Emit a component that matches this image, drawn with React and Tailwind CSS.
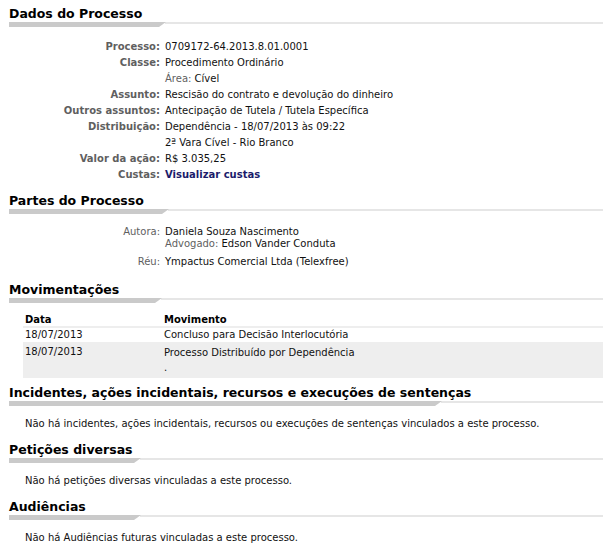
import React from "react";

const Heading = ({ title, barClass }) => (
  <div className="pl-[9px]">
    <h2 className="text-[12.5px] leading-[16px] font-bold text-black">{title}</h2>
    <div className="flex items-start h-[5px]">
      <div className={`h-[5px] bg-[#cacaca] [clip-path:polygon(0_0,100%_0,calc(100%-7px)_100%,0_100%)] ${barClass}`} />
      <div className="flex-1 h-[2px] bg-[#e6e6e6] -ml-[1px]" />
    </div>
  </div>
);

const Row = ({ label, children, plain }) => (
  <div className="grid grid-cols-[160px_1fr] gap-x-[5px] leading-[16px]">
    <div className={`text-right ${plain ? "" : "font-bold"} text-[#5f5f5f]`}>{label}</div>
    <div className="text-[#111]">{children}</div>
  </div>
);

const Empty = ({ children }) => (
  <p className="pl-[25px] mt-[11px] mb-[11px] leading-[14px] text-[#111]">{children}</p>
);

const App = () => {
  return (
    <div className="w-[603px] h-[550px] bg-white overflow-hidden text-[10px] [font-family:'DejaVu_Sans',Verdana,sans-serif] pt-[6px]">
      <Heading title="Dados do Processo" barClass="w-[157px]" />
      <div className="mt-[12px]">
        <Row label="Processo:">0709172-64.2013.8.01.0001</Row>
        <Row label="Classe:">Procedimento Ordinário</Row>
        <Row label="">
          <span className="text-[#5f5f5f]">Área:</span> Cível
        </Row>
        <Row label="Assunto:">Rescisão do contrato e devolução do dinheiro</Row>
        <Row label="Outros assuntos:">Antecipação de Tutela / Tutela Específica</Row>
        <Row label="Distribuição:">Dependência - 18/07/2013 às 09:22</Row>
        <Row label="">2ª Vara Cível - Rio Branco</Row>
        <Row label="Valor da ação:">R$ 3.035,25</Row>
        <Row label="Custas:">
          <a href="#" className="font-bold text-[#1b1b6b]">Visualizar custas</a>
        </Row>
      </div>

      <div className="mt-[10px]">
        <Heading title="Partes do Processo" barClass="w-[160px]" />
      </div>
      <div className="mt-[12px] grid grid-cols-[160px_1fr] gap-x-[5px] gap-y-[6px] leading-[12px]">
        <div className="text-right text-[#5f5f5f]">Autora:</div>
        <div className="text-[#111]">
          <div>Daniela Souza Nascimento</div>
          <div>
            <span className="text-[#5f5f5f]">Advogado:</span> Edson Vander Conduta
          </div>
        </div>
        <div className="text-right text-[#5f5f5f]">Réu:</div>
        <div className="text-[#111]">Ympactus Comercial Ltda (Telexfree)</div>
      </div>

      <div className="mt-[14px]">
        <Heading title="Movimentações" barClass="w-[153px]" />
      </div>
      <table className="ml-[23px] mt-[10px] w-[580px] border-collapse">
        <thead className="leading-[13px]">
          <tr className="border-b-2 border-[#eeeeee]">
            <th className="w-[139px] pl-[2px] text-left font-bold text-black">Data</th>
            <th className="pl-[2px] text-left font-bold text-black">Movimento</th>
          </tr>
        </thead>
        <tbody className="text-[#111] leading-[14px]">
          <tr>
            <td className="pl-[2px] align-top">18/07/2013</td>
            <td className="pl-[2px] align-top">Concluso para Decisão Interlocutória</td>
          </tr>
          <tr className="bg-[#eeeeee]">
            <td className="pl-[2px] pt-[3px] pb-[3px] align-top">18/07/2013</td>
            <td className="pl-[2px] pt-[3px] pb-[3px] align-top leading-[15px]">
              <div>Processo Distribuído por Dependência</div>
              <div>.</div>
            </td>
          </tr>
        </tbody>
      </table>

      <div className="mt-[7px]">
        <Heading title="Incidentes, ações incidentais, recursos e execuções de sentenças" barClass="w-[433px]" />
      </div>
      <Empty>Não há incidentes, ações incidentais, recursos ou execuções de sentenças vinculados a este processo.</Empty>

      <Heading title="Petições diversas" barClass="w-[132px]" />
      <Empty>Não há petições diversas vinculadas a este processo.</Empty>

      <Heading title="Audiências" barClass="w-[132px]" />
      <Empty>Não há Audiências futuras vinculadas a este processo.</Empty>
    </div>
  );
};

export default App;
